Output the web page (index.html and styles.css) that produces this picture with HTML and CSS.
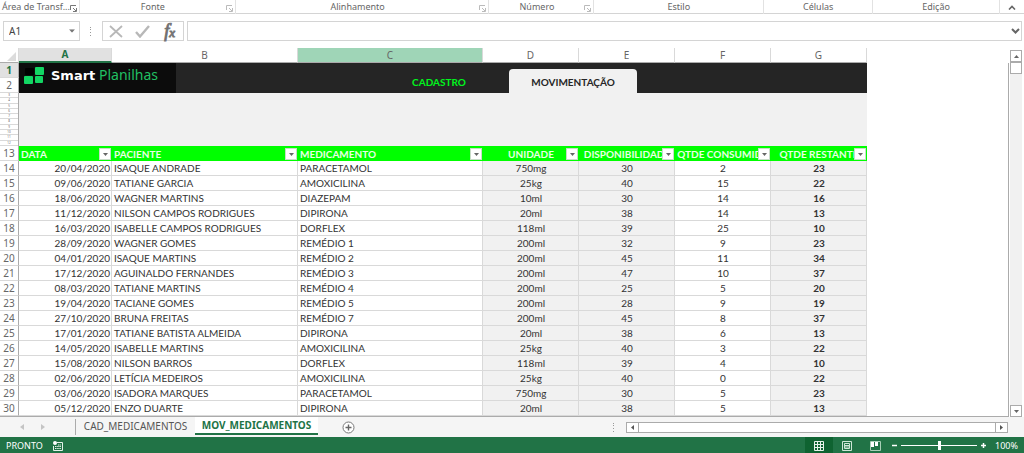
FILE: index.html
```
<!DOCTYPE html>
<html lang="pt-BR">
<head>
<meta charset="utf-8">
<title>Smart Planilhas - Medicamentos</title>
<link rel="stylesheet" href="styles.css">
</head>
<body>
<svg class="defs" width="0" height="0" aria-hidden="true">
  <symbol id="launch" viewBox="0 0 7 7"><path d="M.5 5V.5H6M3 3l3 3M6.500 3v3.500H3" fill="none" stroke="currentColor"/></symbol>
  <symbol id="down" viewBox="0 0 7 4"><path d="M0 0h7L3.500 4z" fill="currentColor"/></symbol>
</svg>

<header class="ribbon">
  <div class="group group-first"><span>Área de Transf...</span><button class="launcher dark" aria-label="Opções da área de transferência"><svg><use href="#launch"/></svg></button></div>
  <div class="group"><span>Fonte</span><button class="launcher" aria-label="Opções de fonte"><svg><use href="#launch"/></svg></button></div>
  <div class="group"><span>Alinhamento</span><button class="launcher" aria-label="Opções de alinhamento"><svg><use href="#launch"/></svg></button></div>
  <div class="group"><span>Número</span><button class="launcher" aria-label="Opções de número"><svg><use href="#launch"/></svg></button></div>
  <div class="group"><span>Estilo</span></div>
  <div class="group"><span>Células</span></div>
  <div class="group"><span>Edição</span></div>
  <button class="collapse" aria-label="Recolher faixa"><svg width="8" height="5" viewBox="0 0 8 5"><path d="M1 4.500L4 1.500l3 3" fill="none" stroke="#666" stroke-width="1.600"/></svg></button>
</header>

<div class="formula-bar">
  <div class="name-box">
    <input type="text" value="A1" aria-label="Caixa de nome">
    <button aria-label="Abrir lista de nomes"><svg width="6" height="4" viewBox="0 0 7 4"><use href="#down"/></svg></button>
  </div>
  <svg class="grip" width="2" height="9" viewBox="0 0 2 9"><path d="M0 0h1v1H0zM0 2h1v1H0zM0 5h1v1H0zM0 8h1v1H0z" fill="#999"/></svg>
  <div class="formula-tools">
    <button aria-label="Cancelar"><svg width="14" height="13" viewBox="0 0 14 13"><path d="M1 1l12 11M13 1L1 12" fill="none" stroke="#b8b8b8" stroke-width="1.800"/></svg></button>
    <button aria-label="Inserir"><svg width="15" height="13" viewBox="0 0 15 13"><path d="M1 7l4 4.500L14 1" fill="none" stroke="#b8b8b8" stroke-width="2.400"/></svg></button>
    <button class="fx" aria-label="Inserir função"><i>f</i><i class="fx-x">x</i></button>
  </div>
  <div class="formula-field">
    <input type="text" aria-label="Barra de fórmulas">
    <button aria-label="Expandir barra de fórmulas"><svg width="9" height="6" viewBox="0 0 9 6"><path d="M1 1l3.500 3.500L8 1" fill="none" stroke="#666" stroke-width="2"/></svg></button>
  </div>
</div>

<main class="sheet">
  <table class="grid">
    <colgroup><col class="c-row"><col class="c-a"><col class="c-b"><col class="c-c"><col class="c-n"><col class="c-n"><col class="c-n"><col class="c-n"><col></colgroup>
    <thead>
      <tr class="letters"><th class="corner"><svg width="9" height="9" viewBox="0 0 9 9"><path d="M9 0v9H0z" fill="#dcdcdc"/></svg></th><th class="active">A</th><th>B</th><th class="hover">C</th><th>D</th><th>E</th><th>F</th><th>G</th><th class="blank"></th></tr>
    </thead>
    <tbody>
      <tr><th class="active-row">1</th>
        <td class="banner-cell" colspan="7" rowspan="2">
          <div class="banner">
            <div class="logo">
              <svg width="21" height="18" viewBox="0 0 21 18"><rect x="1" y="2" width="9" height="7" rx="1" fill="#000"/><rect x="11" y="1" width="9" height="8" rx="1" fill="#12d663"/><rect x="0" y="10" width="9" height="8" rx="1" fill="#12d663"/><rect x="11" y="10" width="8" height="7" rx="1" fill="#12d663"/></svg>
              <span class="logo-text"><b>Smart</b> Planilhas</span>
            </div>
            <nav class="sections"><a href="#cadastro">CADASTRO</a><a class="current" href="#movimentacao">MOVIMENTAÇÃO</a></nav>
          </div>
        </td>
        <td class="outside" rowspan="21"></td></tr>
      <tr><th>2</th></tr>
      <tr class="narrow"><th><div class="thin-rows"><span>3</span><span>4</span><span>5</span><span>6</span><span>7</span><span>8</span><span>9</span><span>10</span><span>11</span><span>12</span></div></th><td class="spacer" colspan="7"></td></tr>
      <tr class="fields"><th>13</th>
        <td>DATA<button aria-label="Filtrar data"><svg><use href="#down"/></svg></button></td>
        <td>PACIENTE<button aria-label="Filtrar paciente"><svg><use href="#down"/></svg></button></td>
        <td>MEDICAMENTO<button aria-label="Filtrar medicamento"><svg><use href="#down"/></svg></button></td>
        <td>UNIDADE<button aria-label="Filtrar unidade"><svg><use href="#down"/></svg></button></td>
        <td>DISPONIBILIDADE<button aria-label="Filtrar disponibilidade"><svg><use href="#down"/></svg></button></td>
        <td>QTDE CONSUMIDA<button aria-label="Filtrar quantidade consumida"><svg><use href="#down"/></svg></button></td>
        <td>QTDE RESTANTE<button aria-label="Filtrar quantidade restante"><svg><use href="#down"/></svg></button></td></tr>
      <tr class="rec"><th>14</th><td>20/04/2020</td><td>ISAQUE ANDRADE</td><td>PARACETAMOL</td><td>750mg</td><td>30</td><td>2</td><td>23</td></tr>
      <tr class="rec"><th>15</th><td>09/06/2020</td><td>TATIANE GARCIA</td><td>AMOXICILINA</td><td>25kg</td><td>40</td><td>15</td><td>22</td></tr>
      <tr class="rec"><th>16</th><td>18/06/2020</td><td>WAGNER MARTINS</td><td>DIAZEPAM</td><td>10ml</td><td>30</td><td>14</td><td>16</td></tr>
      <tr class="rec"><th>17</th><td>11/12/2020</td><td>NILSON CAMPOS RODRIGUES</td><td>DIPIRONA</td><td>20ml</td><td>38</td><td>14</td><td>13</td></tr>
      <tr class="rec"><th>18</th><td>16/03/2020</td><td>ISABELLE CAMPOS RODRIGUES</td><td>DORFLEX</td><td>118ml</td><td>39</td><td>25</td><td>10</td></tr>
      <tr class="rec"><th>19</th><td>28/09/2020</td><td>WAGNER GOMES</td><td>REMÉDIO 1</td><td>200ml</td><td>32</td><td>9</td><td>23</td></tr>
      <tr class="rec"><th>20</th><td>04/01/2020</td><td>ISAQUE MARTINS</td><td>REMÉDIO 2</td><td>200ml</td><td>45</td><td>11</td><td>34</td></tr>
      <tr class="rec"><th>21</th><td>17/12/2020</td><td>AGUINALDO FERNANDES</td><td>REMÉDIO 3</td><td>200ml</td><td>47</td><td>10</td><td>37</td></tr>
      <tr class="rec"><th>22</th><td>08/03/2020</td><td>TATIANE MARTINS</td><td>REMÉDIO 4</td><td>200ml</td><td>25</td><td>5</td><td>20</td></tr>
      <tr class="rec"><th>23</th><td>19/04/2020</td><td>TACIANE GOMES</td><td>REMÉDIO 5</td><td>200ml</td><td>28</td><td>9</td><td>19</td></tr>
      <tr class="rec"><th>24</th><td>27/10/2020</td><td>BRUNA FREITAS</td><td>REMÉDIO 7</td><td>200ml</td><td>45</td><td>8</td><td>37</td></tr>
      <tr class="rec"><th>25</th><td>17/01/2020</td><td>TATIANE BATISTA ALMEIDA</td><td>DIPIRONA</td><td>20ml</td><td>38</td><td>6</td><td>13</td></tr>
      <tr class="rec"><th>26</th><td>14/05/2020</td><td>ISABELLE MARTINS</td><td>AMOXICILINA</td><td>25kg</td><td>40</td><td>3</td><td>22</td></tr>
      <tr class="rec"><th>27</th><td>15/08/2020</td><td>NILSON BARROS</td><td>DORFLEX</td><td>118ml</td><td>39</td><td>4</td><td>10</td></tr>
      <tr class="rec"><th>28</th><td>02/06/2020</td><td>LETÍCIA MEDEIROS</td><td>AMOXICILINA</td><td>25kg</td><td>40</td><td>0</td><td>22</td></tr>
      <tr class="rec"><th>29</th><td>03/06/2020</td><td>ISADORA MARQUES</td><td>PARACETAMOL</td><td>750mg</td><td>30</td><td>5</td><td>23</td></tr>
      <tr class="rec"><th>30</th><td>05/12/2020</td><td>ENZO DUARTE</td><td>DIPIRONA</td><td>20ml</td><td>38</td><td>5</td><td>13</td></tr>
    </tbody>
  </table>
  <div class="vscroll">
    <button aria-label="Rolar para cima"><svg width="5" height="3" viewBox="0 0 5 3"><path d="M0 3h5L2.500 0z" fill="#666"/></svg></button>
    <div class="vtrack"><div class="vthumb"></div></div>
    <button aria-label="Rolar para baixo"><svg width="5" height="3" viewBox="0 0 5 3"><path d="M0 0h5L2.500 3z" fill="#666"/></svg></button>
  </div>
</main>

<div class="tabs">
  <div class="tab-nav">
    <button aria-label="Planilha anterior"><svg width="4" height="6" viewBox="0 0 4 6"><path d="M4 0v6L0 3z" fill="#c4c4c4"/></svg></button>
    <button aria-label="Próxima planilha"><svg width="4" height="6" viewBox="0 0 4 6"><path d="M0 0v6l4-3z" fill="#c4c4c4"/></svg></button>
  </div>
  <button class="tab">CAD_MEDICAMENTOS</button>
  <button class="tab selected">MOV_MEDICAMENTOS</button>
  <button class="add" aria-label="Nova planilha"><svg width="13" height="13" viewBox="0 0 13 13"><circle cx="6.500" cy="6.500" r="5.500" fill="#fff" stroke="#777"/><path d="M6.500 3.500v6M3.500 6.500h6" stroke="#666" stroke-width="1.400"/></svg></button>
  <svg class="tab-grip" width="2" height="9" viewBox="0 0 2 9"><path d="M0 0h1v1H0zM0 2h1v1H0zM0 5h1v1H0zM0 8h1v1H0z" fill="#999"/></svg>
  <div class="hscroll">
    <button aria-label="Rolar para a esquerda"><svg width="3" height="5" viewBox="0 0 3 5"><path d="M3 0v5L0 2.500z" fill="#555"/></svg></button>
    <div class="hthumb"></div>
    <button aria-label="Rolar para a direita"><svg width="3" height="5" viewBox="0 0 3 5"><path d="M0 0v5l3-2.500z" fill="#555"/></svg></button>
  </div>
</div>

<footer class="status">
  <span class="ready">PRONTO</span>
  <button class="macro" aria-label="Gravar macro"><svg width="10" height="10" viewBox="0 0 10 10"><path d="M4 1.500h5.500v8h-9V5" fill="none" stroke="#e6f3ea"/><circle cx="2" cy="2" r="2" fill="#fff"/><path d="M2 5.500h6M2 7.500h6M5 4h3" stroke="#e6f3ea" stroke-dasharray="1.500 .7"/></svg></button>
  <div class="views">
    <button class="on" aria-label="Normal"><svg width="10" height="10" viewBox="0 0 10 10"><path d="M.5.500h9v9h-9zM3.500 0v10M6.500 0v10M0 3.500h10M0 6.500h10" fill="none" stroke="#e6f3ea"/></svg></button>
    <button aria-label="Layout da página"><svg width="10" height="10" viewBox="0 0 10 10"><path d="M.5.500h9v9h-9zM2.500 2.500h5v5h-5zM3 4.500h4M3 6h4" fill="none" stroke="#cfe6d7"/></svg></button>
    <button aria-label="Quebra de página"><svg width="11" height="10" viewBox="0 0 11 10"><path d="M.5.500h10v9H.5z" fill="none" stroke="#a8cfb6"/><path d="M1 1h3v5H1zM5 1h3v4H5z" fill="#fff"/></svg></button>
  </div>
  <div class="zoom">
    <button aria-label="Reduzir"><svg width="7" height="7" viewBox="0 0 7 7"><path d="M1 3.500h5" stroke="#fff" stroke-width="1.500"/></svg></button>
    <input type="range" min="0" max="100" value="50" aria-label="Zoom">
    <button aria-label="Ampliar"><svg width="7" height="7" viewBox="0 0 7 7"><path d="M1 3.500h5M3.500 1v5" stroke="#fff" stroke-width="1.500"/></svg></button>
    <span class="percent">100%</span>
  </div>
</footer>
</body>
</html>
```
FILE: styles.css
```
* { box-sizing: border-box; }

body {
  margin: 0;
  min-height: 100vh;
  display: flex;
  flex-direction: column;
  background: #fff;
  color: #444;
  font: 9px/14px "Noto Sans", "Open Sans", sans-serif;
}

button {
  display: flex;
  align-items: center;
  justify-content: center;
  padding: 0;
  border: 0;
  background: none;
  color: inherit;
  font: inherit;
}

input { min-width: 0; border: 0; padding: 0; background: none; color: inherit; font: inherit; outline: 0; }

.defs { position: absolute; }

/* Ribbon group captions */
.ribbon {
  display: grid;
  grid-template-columns: 79fr 156fr 254fr 105fr 170fr 109fr 127fr 24fr;
  height: 14px;
  border-bottom: 1px solid #d4d4d4;
  color: #666;
}
.group { display: flex; align-items: center; height: 14px; border-right: 1px solid #e2e2e2; white-space: nowrap; }
.group span { flex: 1; text-align: center; }
.group-first span { padding-left: 2px; text-align: left; }
.launcher { width: 7px; height: 7px; margin: 2px 2px 0 0; color: #bbb; }
.launcher.dark { color: #777; }
.launcher svg { width: 7px; height: 7px; }

/* Formula bar */
.formula-bar { display: flex; align-items: center; height: 34px; padding: 6px 3px; }
.name-box, .formula-tools, .formula-field { display: flex; align-items: center; height: 20px; border: 1px solid #d4d4d4; background: #fff; }
.name-box { width: 77px; }
.name-box input { flex: 1; padding-left: 5px; font-size: 10px; }
.name-box button { width: 14px; color: #777; }
.grip { margin: 0 10px; }
.formula-tools { width: 82px; justify-content: space-around; }
.formula-tools button { width: 24px; }
.fx { font: 18px/18px "Liberation Serif", serif; color: #555; -webkit-text-stroke: 1px #777; }
.fx-x { font-size: 13px; padding-top: 3px; }
.formula-field { flex: 1; margin: 0 -1px 0 3px; }
.formula-field input { flex: 1; }
.formula-field button { width: 12px; }

/* Worksheet */
.sheet { flex: 1; display: flex; }
.grid { flex: 1; width: 0; table-layout: fixed; border-spacing: 0; border-bottom: 1px solid #ababab; font: 10px/14px Lato, sans-serif; color: #333; }
.c-row { width: 19px; }
.c-a { width: 93px; }
.c-b { width: 186px; }
.c-c { width: 185px; }
.c-n { width: 96px; }
.grid th, .grid td { padding: 0; overflow: hidden; white-space: nowrap; }
.grid th { border: solid #d9d9d9; border-width: 0 1px 1px 0; font: 10px/14px "Noto Sans", sans-serif; color: #666; }
.grid tbody th { border-right-color: #ababab; }
.grid .letters th { height: 15px; line-height: 13px; border-bottom-color: #ababab; }
.grid .letters .corner { padding: 3px 2px 0 0; text-align: right; line-height: 0; }
.grid .letters .active { background: #e1e1e1; border-bottom: 2px solid #217346; color: #217346; font-weight: 700; }
.grid .letters .hover { background: #9fd5b7; }
.grid .letters .blank { border-color: transparent; }
.grid .active-row { background: #e1e1e1; color: #217346; font-weight: 700; }

.grid .banner-cell { height: 30px; background: #252525; vertical-align: top; }
.banner { display: flex; height: 30px; }
.logo { display: flex; align-items: center; gap: 6px; width: 157px; padding: 0 0 6px 5px; background: #0c0c0c; }
.logo-text { font: 14px/16px "Noto Sans", sans-serif; color: #21c063; }
.logo-text b { color: #fff; font: 700 13px/16px "DejaVu Sans", sans-serif; }
.sections { display: flex; align-items: flex-end; margin-left: 193px; }
.sections a { height: 24px; border-radius: 4px 4px 0 0; color: #00f51d; font: 700 10px/26px Lato, sans-serif; text-align: center; text-decoration: none; width: 140px; }
.sections .current { width: 128px; background: #f1f1f1; color: #262626; }

.grid .narrow th { height: 53px; border-bottom-width: 0; }
.thin-rows { display: flex; flex-direction: column; height: 53px; }
.thin-rows span { flex: 1; min-height: 0; border-bottom: 1px solid #d9d9d9; font-size: 3px; line-height: 4px; }
.grid .spacer { background: #f1f1f1; }
.grid .outside { border-right: 1px solid #ababab; }

.grid .fields td { position: relative; height: 15px; padding: 1px 0 0 2px; background: #0f0; color: #e9ffe6; font-weight: 700; }
.grid .fields td:nth-child(n+5) { padding-left: 0; text-align: center; }
.grid .fields button { position: absolute; top: 2px; right: 1px; width: 12px; height: 12px; background: #fff; border: 1px solid #c8dcc8; color: #666; }
.grid .fields svg { width: 5px; height: 3px; }
.grid .rec td { height: 15px; padding: 0 1px 0 2px; border: solid #d9d9d9; border-width: 0 1px 1px 0; }
.grid .rec td:nth-child(2) { text-align: right; }
.grid .rec td:nth-child(n+5) { text-align: center; }
.grid .rec td:nth-child(5), .grid .rec td:nth-child(6), .grid .rec td:nth-child(8) { background: #f1f1f1; }
.grid .rec td:nth-child(8) { font-weight: 700; }

.vscroll { display: flex; flex-direction: column; width: 15px; padding: 2px 2px 0 1px; }
.vscroll button { height: 12px; border: 1px solid #ababab; background: #fff; }
.vtrack { flex: 1; background: #f1f1f1; }
.vthumb { height: 12px; border: 1px solid #ababab; background: #fff; }

/* Sheet tabs */
.tabs { display: flex; align-items: center; height: 20px; background: #f5f5f5; font: 10px/18px "Noto Sans", sans-serif; }
.tab-nav { display: flex; align-items: center; gap: 17px; width: 76px; height: 16px; padding-left: 20px; border-right: 1px solid #ababab; }
.tab { width: 119px; height: 18px; margin-bottom: 2px; color: #555; }
.tab.selected { width: 123px; border-bottom: 2px solid #217346; background: #fff; color: #217346; font-weight: 700; }
.add { margin-left: 24px; }
.tab-grip { margin-left: auto; }
.hscroll { display: flex; width: 382px; height: 11px; margin: 0 16px 0 11px; border: 1px solid #ababab; background: #fff; }
.hscroll button { width: 11px; }
.hthumb { flex: 1; border: solid #ababab; border-width: 0 1px; }

/* Status bar */
.status { display: flex; align-items: center; height: 17px; background: #217346; color: #fff; }
.ready { width: 53px; padding-left: 6px; }
.views { display: flex; height: 17px; margin-left: auto; }
.views button { width: 28px; }
.views .on { background: #0f6331; }
.zoom { display: flex; align-items: center; margin-left: 2px; }
.zoom input { width: 76px; height: 11px; margin: 0 3px; appearance: none; background: linear-gradient(#fff, #fff) center / 100% 1px no-repeat; }
.zoom input::-webkit-slider-thumb { appearance: none; width: 3px; height: 9px; background: #fff; }
.percent { width: 37px; padding-right: 6px; text-align: right; }
```
